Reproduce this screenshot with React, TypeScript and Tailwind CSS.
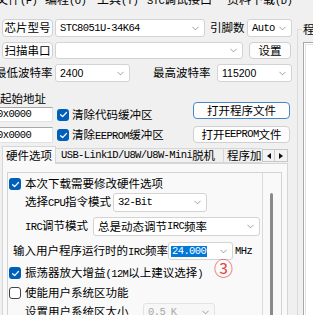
import { ChevronDown } from "lucide-react"
import type { ReactNode } from "react"

const MONO = "font-['Liberation_Mono',monospace] text-[10.5px] tracking-[-0.6px]"

// split a label into ASCII runs (mono) and CJK runs
function Mix({ text }: { text: string }) {
  const parts = text.match(/[\x20-\x7e]+|[^\x20-\x7e]+/g) ?? []
  return (
    <>
      {parts.map((p, i) =>
        /^[\x20-\x7e]/.test(p) ? (
          <span key={i} className={MONO}>
            {p}
          </span>
        ) : (
          <span key={i}>{p}</span>
        )
      )}
    </>
  )
}

function Btn({ className, children, active }: { className: string; children: ReactNode; active?: boolean }) {
  return (
    <div
      className={`flex shrink-0 items-center justify-center rounded-[4px] border bg-[#fdfdfd] ${
        active ? "border-[#4a86c4]" : "border-[#d0d0d0]"
      } ${className}`}
    >
      {children}
    </div>
  )
}

function Combo({ className, children }: { className: string; children?: ReactNode }) {
  return (
    <div
      className={`flex shrink-0 items-center justify-between rounded-[3px] border border-[#d3d3d3] bg-white pl-[4px] pr-[3px] ${className}`}
    >
      <div className="flex items-center">{children}</div>
      <ChevronDown size={11} strokeWidth={1.3} className="text-[#606060]" />
    </div>
  )
}

function Check({ on }: { on?: boolean }) {
  return on ? (
    <div className="flex h-[12px] w-[12px] shrink-0 items-center justify-center rounded-[3px] bg-[#005fb8]">
      <svg width="9" height="9" viewBox="0 0 10 10">
        <path d="M1.8 5.2 L4 7.3 L8.3 2.8" stroke="white" strokeWidth="1.4" fill="none" strokeLinecap="round" strokeLinejoin="round" />
      </svg>
    </div>
  ) : (
    <div className="h-[12px] w-[12px] shrink-0 rounded-[3px] border border-[#444] bg-white" />
  )
}

export default function App() {
  return (
    <div className="h-[315px] w-[313px] overflow-hidden bg-[#f0f0f0] font-['Noto_Sans_CJK_SC',sans-serif] text-[11.5px] leading-none text-black">
      {/* menu bar, only the bottom of it shows */}
      <div className="h-[6px] overflow-hidden">
        <div className="-mt-[8px] flex text-[12px] leading-[14px]">
          <div className="-ml-[4px] w-[49px] shrink-0"><Mix text="文件(F)" /></div>
          <div className="w-[52px] shrink-0"><Mix text="编程(O)" /></div>
          <div className="w-[50px] shrink-0"><Mix text="工具(T)" /></div>
          <div className="w-[80px] shrink-0"><Mix text="STC调试接口(S)" /></div>
          <div className="shrink-0 whitespace-nowrap"><Mix text="资料下载(D)" /></div>
        </div>
      </div>

      <div className="flex">
        <div className="w-[293px] shrink-0">
          {/* chip model */}
          <div className="mt-[13px] flex h-[18px] items-center">
            <Btn className="ml-[2px] h-[18px] w-[51px]">芯片型号</Btn>
            <Combo className="ml-[2px] h-[18px] w-[150px]">
              <span className={MONO}>STC8051U-34K64</span>
            </Combo>
            <span className="ml-[5px] w-[37px] shrink-0">引脚数</span>
            <Combo className="h-[18px] w-[45px]">
              <span className={MONO}>Auto</span>
            </Combo>
          </div>

          {/* serial port */}
          <div className="mt-[5px] flex h-[17px] items-center">
            <Btn className="ml-[2px] h-[17px] w-[51px]">扫描串口</Btn>
            <Combo className="ml-[2px] h-[17px] w-[188px]" />
            <Btn className="ml-[6px] h-[17px] w-[42px]">设置</Btn>
          </div>

          {/* baud rates */}
          <div className="mt-[5px] flex h-[18px] items-center">
            <span className="-ml-[5px] w-[60px] shrink-0 whitespace-nowrap">最低波特率</span>
            <Combo className="h-[18px] w-[75px]">
              <span className="font-['Liberation_Sans',sans-serif] text-[10.5px]">2400</span>
            </Combo>
            <span className="ml-[23px] w-[64px] shrink-0 whitespace-nowrap">最高波特率</span>
            <Combo className="h-[18px] w-[75px]">
              <span className="font-['Liberation_Sans',sans-serif] text-[10.5px]">115200</span>
            </Combo>
          </div>

          {/* start address + buffers + open file */}
          <div className="flex">
            <div className="w-[193px] shrink-0">
              <div className="mt-[9px] flex h-[15px] items-center">起始地址</div>
              <div className="mt-[1px] flex h-[15px] items-center">
                <div className="-ml-[10px] flex h-[15px] w-[63px] shrink-0 items-center border border-[#e2e2e2] border-t-[#a8a8a8] bg-white pl-[6px]">
                  <span className={MONO}>0x0000</span>
                </div>
                <div className="ml-[4px]"><Check on /></div>
                <span className="ml-[3px] whitespace-nowrap">清除代码缓冲区</span>
              </div>
              <div className="mt-[5px] flex h-[16px] items-center">
                <div className="-ml-[10px] flex h-[16px] w-[63px] shrink-0 items-center border border-[#e2e2e2] border-t-[#a8a8a8] bg-white pl-[6px]">
                  <span className={MONO}>0x0000</span>
                </div>
                <div className="ml-[4px]"><Check on /></div>
                <span className="ml-[3px] whitespace-nowrap"><Mix text="清除EEPROM缓冲区" /></span>
              </div>
            </div>
            <div>
              <Btn active className="mt-[20px] h-[17px] w-[97px]">打开程序文件</Btn>
              <Btn className="mt-[7px] h-[17px] w-[97px]"><Mix text="打开EEPROM文件" /></Btn>
            </div>
          </div>

          {/* tabs */}
          <div className="mt-[3px] flex h-[17px] items-end">
            <div className="relative z-10 ml-[2px] -mb-px flex h-[18px] w-[54px] shrink-0 items-center justify-center border border-b-0 border-[#d6d6d6] bg-[#f9f9f9]">
              硬件选项
            </div>
            <div className="flex h-[15px] w-[168px] shrink-0 items-center whitespace-nowrap border-y border-r border-[#d6d6d6] pl-[5px]">
              <Mix text="USB-Link1D/U8W/U8W-Mini脱机" />
            </div>
            <div className="flex h-[15px] w-[38px] shrink-0 items-center overflow-hidden whitespace-nowrap border-y border-[#d6d6d6] pl-[3px]">
              程序加载
            </div>
            <div className="mb-px flex h-[13px] w-[13px] shrink-0 items-center justify-center border border-[#c8c8c8] bg-[#f3f3f3]">
              <svg width="4" height="6" viewBox="0 0 4 6"><path d="M4 0 L0 3 L4 6 Z" fill="#111" /></svg>
            </div>
            <div className="mb-px flex h-[13px] w-[13px] shrink-0 items-center justify-center border border-l-0 border-[#c8c8c8] bg-[#f3f3f3]">
              <svg width="4" height="6" viewBox="0 0 4 6"><path d="M0 0 L4 3 L0 6 Z" fill="#111" /></svg>
            </div>
          </div>

          {/* tab page */}
          <div className="ml-[2px] h-[160px] w-[286px] border border-[#d6d6d6] bg-[#f9f9f9] pl-[4px] pt-[8px]">
            <div className="flex h-[160px] w-[275px] border border-[#d3d3d3]">
              <div className="relative w-[254px] shrink-0">
                <div className="mt-[5px] flex h-[12px] items-center">
                  <div className="ml-[1px]"><Check on /></div>
                  <span className="ml-[4px] whitespace-nowrap">本次下载需要修改硬件选项</span>
                </div>
                <div className="mt-[3px] flex h-[19px] items-center">
                  <span className="ml-[17px] w-[88px] shrink-0 whitespace-nowrap"><Mix text="选择CPU指令模式" /></span>
                  <Combo className="h-[19px] w-[94px]">
                    <span className={MONO}>32-Bit</span>
                  </Combo>
                </div>
                <div className="mt-[5px] flex h-[19px] items-center">
                  <span className="ml-[17px] w-[68px] shrink-0 whitespace-nowrap"><Mix text="IRC调节模式" /></span>
                  <Combo className="h-[19px] w-[167px]">
                    <Mix text="总是动态调节IRC频率" />
                  </Combo>
                </div>
                <div className="mt-[6px] flex h-[18px] items-center">
                  <span className="ml-[5px] w-[155px] shrink-0 whitespace-nowrap"><Mix text="输入用户程序运行时的IRC频率" /></span>
                  <Combo className="h-[18px] w-[65px] !pl-[2px]">
                    <span className={`${MONO} bg-[#0078d7] px-px leading-[11px] text-white`}>24.000</span>
                  </Combo>
                  <span className={`${MONO} ml-[2px]`}>MHz</span>
                </div>
                <span className="absolute left-[206px] top-[85px] text-[19px] leading-[19px] text-[#e0483e]">③</span>
                <div className="mt-[7px] flex h-[12px] items-center">
                  <div className="ml-[1px]"><Check on /></div>
                  <span className="ml-[4px] whitespace-nowrap"><Mix text="振荡器放大增益(12M以上建议选择)" /></span>
                </div>
                <div className="mt-[8px] flex h-[12px] items-center">
                  <div className="ml-[1px]"><Check /></div>
                  <span className="ml-[4px] whitespace-nowrap">使能用户系统区功能</span>
                </div>
                <div className="mt-[4px] flex h-[18px] items-center">
                  <span className="ml-[17px] w-[118px] shrink-0 whitespace-nowrap">设置用户系统区大小</span>
                  <Combo className="h-[18px] w-[72px] !border-[#e3e3e3] !bg-[#f7f7f7]">
                    <span className={`${MONO} text-[#a8a8a8]`}>0.5 K</span>
                  </Combo>
                </div>
              </div>
              <div className="flex-1 border-l border-[#dadada]">
                <div className="ml-[7px] mt-[20px] h-[140px] w-[3px] rounded-full bg-[#8a8a8a]" />
              </div>
            </div>
          </div>
        </div>

        {/* right panel (cut off) */}
        <div className="flex-1">
          <div className="ml-[4px] mt-[23px] h-[300px] border-l border-t border-[#dcdcdc]">
            <div className="-mt-[7px] ml-[4px] w-[14px] bg-[#f0f0f0] pl-px text-[11.5px] leading-[13px]">程</div>
            <div className="ml-[5px] mt-[6px] h-[280px] border-l border-t border-[#a8a8a8] bg-white">
              <div className="ml-px mt-px h-full border-l border-t border-[#e4e4e4]" />
            </div>
          </div>
        </div>
      </div>
    </div>
  )
}
